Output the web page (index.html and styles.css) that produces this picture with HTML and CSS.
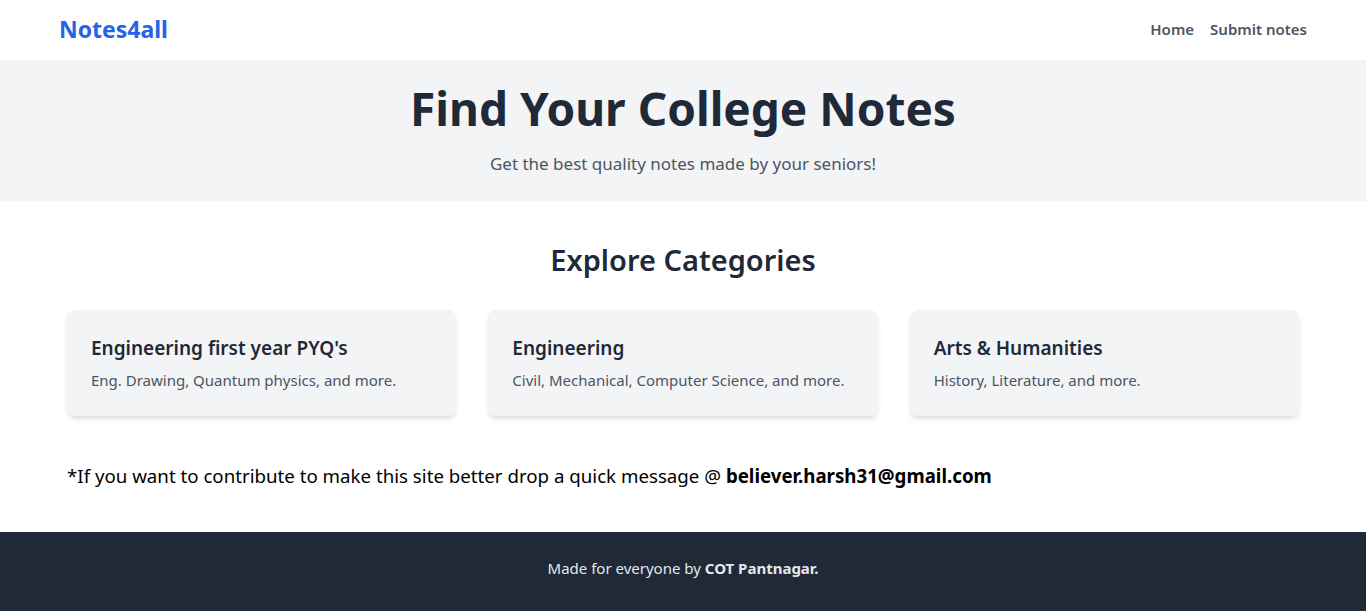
FILE: index.html
```html
<!DOCTYPE html>
<html lang="en">
<head>
<meta charset="utf-8">
<title>Notes4all</title>
<link rel="stylesheet" href="styles.css">
</head>
<body>
<header class="nav">
  <div class="nav-inner">
    <a class="logo" href="#">Notes4all</a>
    <nav class="links">
      <a href="#">Home</a>
      <a href="#">Submit notes</a>
    </nav>
  </div>
</header>
<section class="hero">
  <h1>Find Your College Notes</h1>
  <p>Get the best quality notes made by your seniors!</p>
</section>
<main class="main">
  <h2>Explore Categories</h2>
  <div class="grid">
    <div class="card">
      <h3>Engineering first year PYQ's</h3>
      <p>Eng. Drawing, Quantum physics, and more.</p>
    </div>
    <div class="card">
      <h3>Engineering</h3>
      <p>Civil, Mechanical, Computer Science, and more.</p>
    </div>
    <div class="card">
      <h3>Arts &amp; Humanities</h3>
      <p>History, Literature, and more.</p>
    </div>
  </div>
  <p class="contrib">*If you want to contribute to make this site better drop a quick message @ <b>believer.harsh31@gmail.com</b></p>
</main>
<footer class="footer">
  <p>Made for everyone by <b>COT Pantnagar.</b></p>
</footer>
</body>
</html>
```
FILE: styles.css
```css
* { box-sizing: border-box; margin: 0; padding: 0; }
html, body { height: 100%; }
body {
  font-family: "Noto Sans", "Open Sans", sans-serif;
  color: #000;
  background: #fff;
  display: flex;
  flex-direction: column;
}
a { text-decoration: none; }
.nav { background: #fff; box-shadow: 0 1px 2px rgba(0,0,0,0.06); }
.nav-inner {
  max-width: 1280px;
  margin: 0 auto;
  padding: 0 16px 3px;
  height: 60px;
  display: flex;
  align-items: center;
  justify-content: space-between;
}
.logo { color: #2563eb; font-size: 23px; font-weight: 700; }
.links { display: flex; gap: 16px; }
.links a { color: #4b5563; font-size: 15px; font-weight: 600; }
.hero {
  background: #f3f4f6;
  text-align: center;
  padding: 16px 0 24px;
  margin-top: 1px;
}
.hero h1 { font-size: 46px; line-height: 62px; font-weight: 700; color: #1f2937; }
.hero p { margin-top: 12px; font-size: 17px; line-height: 26px; color: #4b5563; }
.main {
  width: 100%;
  max-width: 1280px;
  margin: 0 auto;
  padding: 39px 24px 42px;
}
.main h2 { text-align: center; font-size: 29px; line-height: 40px; font-weight: 600; color: #1f2937; margin-bottom: 30px; }
.grid { display: grid; grid-template-columns: repeat(3, 1fr); gap: 32px; }
.card {
  background: #f3f4f6;
  border-radius: 8px;
  padding: 24px;
  box-shadow: 0 4px 6px -1px rgba(0,0,0,0.1), 0 2px 4px -2px rgba(0,0,0,0.1);
  height: 106px;
}
.card h3 { font-size: 19px; line-height: 28px; font-weight: 600; color: #1f2937; }
.card p { margin-top: 6px; font-size: 15px; line-height: 24px; color: #4b5563; }
.contrib { margin-top: 46px; font-size: 18.7px; line-height: 28px; color: #000; }
.contrib b { font-weight: 700; }
.footer {
  flex: 1;
  background: #1f2937;
  color: #e5e7eb;
  text-align: center;
  padding: 24px 0;
  font-size: 15px;
  line-height: 24px;
}
.footer b { font-weight: 700; }
```
